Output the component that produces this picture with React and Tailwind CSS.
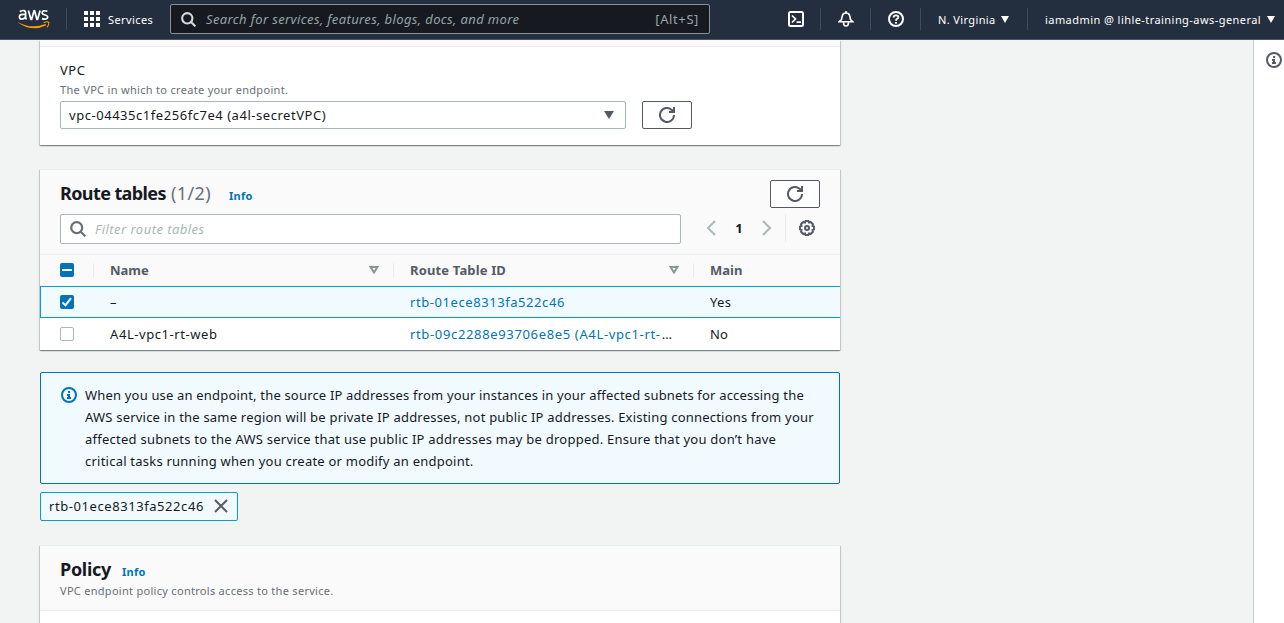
const Refresh = () => (
  <svg className="size-4" viewBox="0 0 16 16" fill="none" stroke="#545b64" strokeWidth="2">
    <path d="M15 8a7 7 0 1 1-2.1-5L15 5" />
    <path d="M15 0v5h-5" />
  </svg>
);

const Search = ({ color, size = "size-4" }) => (
  <svg className={`${size} shrink-0`} viewBox="0 0 16 16" fill="none" stroke={color} strokeWidth="2.2">
    <circle cx="6.7" cy="6.7" r="5.5" />
    <path d="M10.7 10.7l4.6 4.6" />
  </svg>
);

const InfoIcon = ({ color }) => (
  <svg className="size-4 shrink-0" viewBox="0 0 16 16" fill="none" stroke={color} strokeWidth="2">
    <circle cx="8" cy="8" r="7" />
    <path d="M8 4v2M6 8h2v4M6 11h4" />
  </svg>
);

const Sort = () => (
  <svg className="h-2 w-2.5 shrink-0" viewBox="0 0 10 8" fill="none" stroke="#879596" strokeWidth="2">
    <path d="M1.5 1h7L5 6.5z" />
  </svg>
);

const Caret = () => (
  <svg className="h-[7px] w-2 shrink-0" viewBox="0 0 8 7" fill="#fff">
    <path d="M0 0h8L4 7z" />
  </svg>
);

const RefreshButton = () => (
  <button className="flex h-7 w-[50px] shrink-0 items-center justify-center rounded-xs border border-[#545b64] bg-white">
    <Refresh />
  </button>
);

const Divider = () => <div className="h-[22px] w-px shrink-0 bg-[#414b58]" />;

const cardShadow = "shadow-[0_1px_1px_0_rgba(0,28,36,0.3),1px_1px_1px_0_rgba(0,28,36,0.15),-1px_1px_1px_0_rgba(0,28,36,0.15)]";

function Header() {
  return (
    <header className="flex h-10 shrink-0 items-start border-b border-[#4b5563] bg-[#232f3e] text-[13px] text-white">
      <div className="w-[66px] pt-[9px] pl-[18px]">
        <svg className="h-5 w-8" viewBox="0 0 32 20" fill="none">
          <g stroke="#fff" strokeWidth="1.7" strokeLinejoin="round">
            <path d="M1.8 2.6Q7.6 0 7.6 3.7V8Q7.6 9.500 8.5 10.500M7.6 5.500Q1.4 4.700 1.4 7.700Q1.4 10.200 4 10.200Q7.6 9.900 7.6 7.100" />
            <path d="M10.4 1.500l2.5 8.8h.8L16 1.700h.6l2.2 8.6h.8L22.1 1.500" />
            <path d="M29.4 2.300Q24.2.7 24.2 3.700Q24.2 5.300 27 6Q29.7 6.700 29.7 8.100Q29.7 11.100 23.9 9.600" />
          </g>
          <path d="M.3 13.2Q13 20.5 27.5 15l.8 1.2Q14 23.5.3 13.7z" fill="#f90" />
          <path d="M25.6 13.7Q29.8 12 30.8 13.5Q31.2 16.2 29 18.3" stroke="#f90" strokeWidth="1.1" />
        </svg>
      </div>
      <div className="pt-2"><Divider /></div>
      <div className="flex w-[103px] items-start pt-[11px] pl-[17px]">
        <svg className="size-4 shrink-0" viewBox="0 0 16 16" fill="#fff">
          <path d="M0 0h4v4H0zM6 0h4v4H6zM12 0h4v4h-4zM0 6h4v4H0zM6 6h4v4H6zM12 6h4v4h-4zM0 12h4v4H0zM6 12h4v4H6zM12 12h4v4h-4z" />
        </svg>
        <span className="ml-2 text-[11px] leading-[18px] tracking-[0.4px]">Services</span>
      </div>
      <div className="mt-1 flex h-[30px] w-[540px] items-center rounded-xs border border-[#879596] bg-[#16191f] pr-[10px] pl-[10px] text-[#95a5a6]">
        <Search color="#d5dbdb" size="size-[15px]" />
        <span className="ml-[10px] flex-1 tracking-[0.37px] italic">Search for services, features, blogs, docs, and more</span>
        <span className="tracking-[0.6px]">[Alt+S]</span>
      </div>
      <div className="flex items-center pt-2 pl-[78px]">
        <svg className="size-4" viewBox="0 0 16 16" fill="none" stroke="#fff" strokeWidth="2">
          <rect x="1" y="1" width="14" height="14" rx="1.5" />
          <path d="M4 4.5L7.5 8 4 11.5M8.5 11.2H13" strokeWidth="1.7" />
        </svg>
        <div className="w-4" />
        <Divider />
        <svg className="ml-[17px] size-4" viewBox="0 0 16 16" fill="none" stroke="#fff" strokeWidth="1.6">
          <path d="M8 0v2M1.200 10.700L3.500 8.500 4.300 4.700Q5 2 8 2t3.700 2.700L12.500 8.500 14.800 10.700zM5.500 11.500q0 3.500 2.500 3.500t2.500-3.500" />
        </svg>
        <div className="w-4" />
        <Divider />
        <svg className="ml-[17px] size-4" viewBox="0 0 16 16" fill="none" stroke="#fff" strokeWidth="2">
          <circle cx="8" cy="8" r="7" />
          <path d="M5.6 6.5Q5.6 4.4 8 4.4t2.4 1.9Q10.4 7.3 9 7.9 8 8.4 8 9.8M8 11v1.8" strokeWidth="1.8" />
        </svg>
        <div className="w-4" />
        <Divider />
        <div className="ml-[17px] flex w-[71px] items-center justify-between">
          <span className="pt-px text-[11px] leading-[21px] tracking-[0.38px]">N. Virginia</span>
          <Caret />
        </div>
        <div className="w-[18px]" />
        <Divider />
        <div className="ml-[17px] flex w-[230px] items-center justify-between">
          <span className="pt-px text-[11px] leading-[21px] tracking-[0.44px] whitespace-nowrap">iamadmin @ lihle-training-aws-general</span>
          <Caret />
        </div>
      </div>
    </header>
  );
}

function VpcCard() {
  return (
    <section className={`h-[105px] bg-white ${cardShadow}`}>
      <div className="h-[7px] border-b border-[#eaeded] bg-[#fafafa]" />
      <div className="px-5 pt-3">
        <div className="leading-[22px] tracking-[0.5px]">VPC</div>
        <div className="pt-px text-[11px] leading-4 tracking-[0.31px] text-[#687078]">The VPC in which to create your endpoint.</div>
        <div className="mt-[3px] flex gap-4">
          <div className="flex h-7 w-[566px] items-center justify-between rounded-xs border border-[#aab7b8] pr-[11px] pl-2">
            <span className="tracking-[0.54px]">vpc-04435c1fe256fc7e4 (a4l-secretVPC)</span>
            <svg className="h-2 w-2.5" viewBox="0 0 10 8" fill="#545b64"><path d="M0 0h10L5 8z" /></svg>
          </div>
          <RefreshButton />
        </div>
      </div>
    </section>
  );
}

const cols = "grid grid-cols-[50px_300px_300px_150px] items-center";

function RouteTables() {
  return (
    <section className={`mt-6 h-[181px] bg-white ${cardShadow}`}>
      <div className="h-[86px] border-y border-[#eaeded] bg-[#fafafa] px-5 pt-[10px]">
        <div className="flex h-7 justify-between">
          <h2 className="-mt-px flex items-baseline text-lg leading-7 font-bold">
            <span className="tracking-[-0.6px]">Route tables</span>
            <span className="ml-[5px] font-normal tracking-[0.4px] text-[#687078]">(1/2)</span>
            <a className="ml-[18px] text-[11px] tracking-[0.3px] text-[#0073bb]">Info</a>
          </h2>
          <RefreshButton />
        </div>
        <div className="mt-[6px] flex items-center">
          <div className="flex h-[30px] w-[621px] items-center rounded-xs border border-[#aab7b8] bg-white pl-[9px]">
            <Search color="#687078" />
            <span className="ml-[9px] tracking-[0.46px] text-[#aab7b8] italic">Filter route tables</span>
          </div>
          <svg className="mb-[2px] ml-[22px] size-4" viewBox="0 0 16 16" fill="none" stroke="#aab7b8" strokeWidth="2"><path d="M12 1L5 8l7 7" /></svg>
          <span className="mb-[2px] w-[40px] text-center font-bold">1</span>
          <svg className="mb-[2px] size-4" viewBox="0 0 16 16" fill="none" stroke="#aab7b8" strokeWidth="2"><path d="M4 1l7 7-7 7" /></svg>
          <div className="mb-[2px] ml-[10px] h-7 w-px bg-[#eaeded]" />
          <svg className="mb-[2px] ml-[13px] size-4" viewBox="0 0 16 16" fill="none" stroke="#545b64" strokeWidth="2">
            <path d="M6.6 1h2.8l.6 1.5 1.6-.5L14 4.4l-.5 1.6 1.5.6v2.8l-1.5.6.5 1.6-2.4 2.4-1.6-.5-.6 1.5H6.6l-.6-1.5-1.6.5L2 11.6l.5-1.6L1 9.4V6.6L2.5 6 2 4.4 4.4 2l1.6.5z" />
            <circle cx="8" cy="8" r="2" />
          </svg>
        </div>
      </div>
      <div className={`${cols} h-[31px] bg-[#fafafa] pb-px font-bold text-[#545b64]`}>
        <span className="flex pl-5">
          <svg className="size-3.5" viewBox="0 0 14 14"><rect width="14" height="14" rx="2" fill="#0073bb" /><path d="M2 7h10" stroke="#fff" strokeWidth="2" /></svg>
        </span>
        <span className="flex items-center">
          <i className="ml-[3px] h-[15px] w-px bg-[#eaeded]" />
          <span className="ml-4 flex-1">Name</span><Sort /><i className="mr-[-4px] ml-[14px] h-[15px] w-px bg-[#eaeded]" />
        </span>
        <span className="flex items-center">
          <span className="ml-5 flex-1 tracking-[0.15px]">Route Table ID</span><Sort /><i className="mr-[-4px] ml-[14px] h-[15px] w-px bg-[#eaeded]" />
        </span>
        <span className="pl-5">Main</span>
      </div>
      <div className={`${cols} h-8 border-y border-l border-[#00a1c9] bg-[#f1faff]`}>
        <span className="flex pl-[19px]">
          <svg className="size-3.5" viewBox="0 0 14 14"><rect width="14" height="14" rx="2" fill="#0073bb" /><path d="M2.5 7.5l3 2.8L11 3.2" fill="none" stroke="#fff" strokeWidth="2" /></svg>
        </span>
        <span className="pl-[19px]">–</span>
        <a className="pl-[19px] tracking-[0.57px] text-[#0073bb]">rtb-01ece8313fa522c46</a>
        <span className="pl-[19px] tracking-[0.3px]">Yes</span>
      </div>
      <div className={`${cols} h-8`}>
        <span className="flex pl-5"><i className="size-3.5 rounded-xs border border-[#aab7b8] bg-white" /></span>
        <span className="pl-5 tracking-[0.57px]">A4L-vpc1-rt-web</span>
        <span className="pl-5 tracking-[0.65px] whitespace-nowrap"><a className="text-[#0073bb]">rtb-09c2288e93706e8e5 (A4L-vpc1-rt-</a><span className="pl-px">…</span></span>
        <span className="pl-5 tracking-[0.2px]">No</span>
      </div>
    </section>
  );
}

export default function App() {
  return (
    <div className="flex h-[623px] w-[1284px] flex-col overflow-hidden bg-[#f2f3f3] font-['Noto_Sans',sans-serif] text-[13px] leading-[22px] text-[#16191f]">
      <Header />
      <div className="flex min-h-0 flex-1">
        <main className="h-full w-[1253px] overflow-hidden pl-10">
          <div className="w-[800px]">
            <VpcCard />
            <RouteTables />
            <div className="mt-[22px] flex h-[112px] gap-2 rounded-xs border border-[#0073bb] bg-[#f1faff] pt-[11px] pl-5">
              <div className="pt-[3px]"><InfoIcon color="#0073bb" /></div>
              <p className="whitespace-nowrap">
                <span className="tracking-[0.18px]">When you use an endpoint, the source IP addresses from your instances in your affected subnets for accessing the</span><br />
                <span className="tracking-[0.21px]">AWS service in the same region will be private IP addresses, not public IP addresses. Existing connections from your</span><br />
                <span className="tracking-[0.245px]">affected subnets to the AWS service that use public IP addresses may be dropped. Ensure that you don’t have</span><br />
                <span className="tracking-[0.23px]">critical tasks running when you create or modify an endpoint.</span>
              </p>
            </div>
            <div className="mt-2 flex h-[29px] w-[198px] items-center justify-between rounded-xs border border-[#00a1c9] bg-[#f1faff] pr-[9px] pb-px pl-2">
              <span className="tracking-[0.57px]">rtb-01ece8313fa522c46</span>
              <svg className="size-3.5" viewBox="0 0 14 14" fill="none" stroke="#545b64" strokeWidth="2"><path d="M1 1l12 12M13 1L1 13" /></svg>
            </div>
            <section className={`mt-6 h-[120px] bg-white ${cardShadow}`}>
              <div className="h-[66px] border-y border-[#eaeded] bg-[#fafafa] px-5 pt-[9px]">
                <h2 className="flex h-7 items-baseline text-lg leading-7 font-bold">
                  <span className="tracking-[-0.3px]">Policy</span>
                  <a className="ml-[11px] text-[11px] tracking-[0.3px] text-[#0073bb]">Info</a>
                </h2>
                <p className="text-[11px] leading-4 tracking-[0.29px] text-[#687078]">VPC endpoint policy controls access to the service.</p>
              </div>
            </section>
          </div>
        </main>
        <aside className="flex-1 border-l border-[#c4c8c8] bg-white pt-3 pl-3">
          <InfoIcon color="#545b64" />
        </aside>
      </div>
    </div>
  );
}
